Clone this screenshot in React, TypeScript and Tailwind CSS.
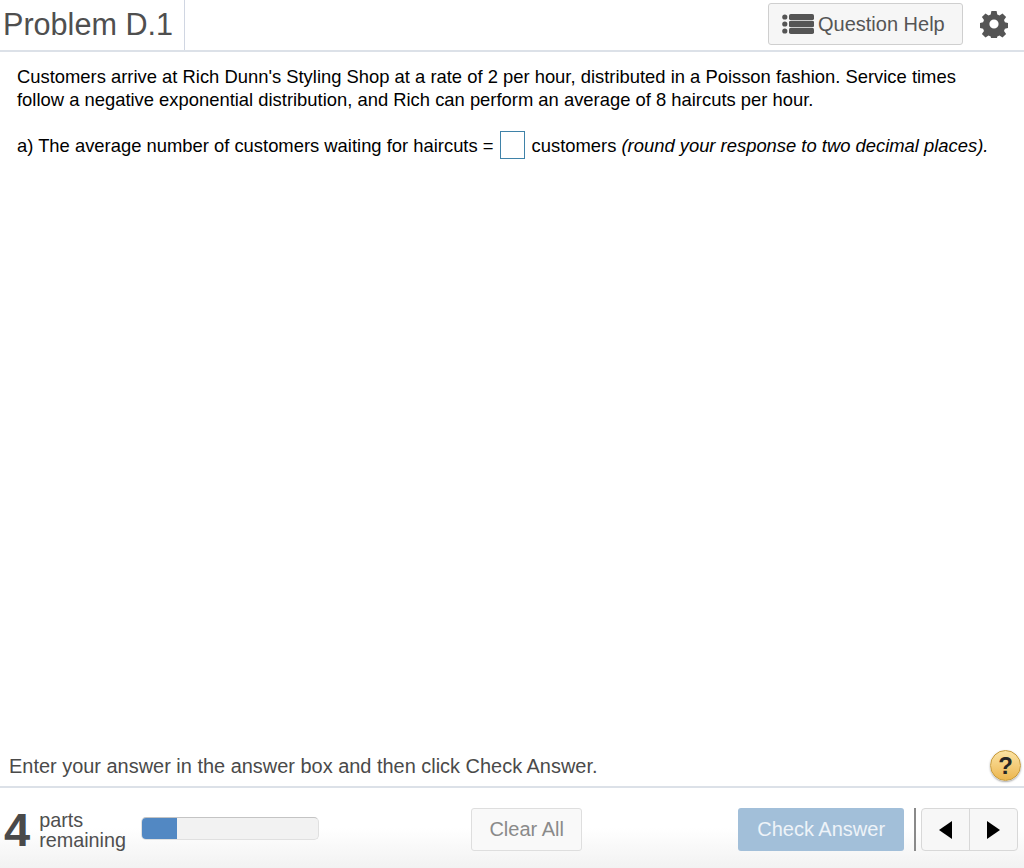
const font = "font-['Liberation_Sans',Arial,sans-serif]";

function ListIcon() {
  return (
    <svg width="32" height="22" viewBox="0 0 32 22" className="shrink-0" fill="#555">
      <circle cx="2.8" cy="4" r="2.6" />
      <circle cx="2.8" cy="11" r="2.6" />
      <circle cx="2.8" cy="18" r="2.6" />
      <rect x="7" y="1" width="25" height="6.2" rx="1.8" />
      <rect x="7" y="7.9" width="25" height="6.2" rx="1" />
      <rect x="7" y="14.8" width="25" height="6.2" rx="1.8" />
    </svg>
  );
}

function GearIcon() {
  return (
    <svg width="28" height="28" viewBox="0 0 28 28" fill="#555">
      <path
        fillRule="evenodd"
        d="M11.4 1h5.2l.7 3.6 2.2.9 3-2.1 3.6 3.6-2.1 3 .9 2.2 3.1.7v5.2l-3.1.7-.9 2.2 2.1 3-3.6 3.6-3-2.1-2.2.9-.7 3.6h-5.2l-.7-3.6-2.2-.9-3 2.1-3.6-3.6 2.1-3-.9-2.2-3.1-.7v-5.2l3.1-.7.9-2.2-2.1-3 3.6-3.6 3 2.1 2.2-.9zM14 9.4a4.6 4.6 0 1 0 0 9.2 4.6 4.6 0 0 0 0-9.2z"
      />
    </svg>
  );
}

export default function App() {
  return (
    <div className={`${font} flex h-[868px] w-[1024px] flex-col overflow-hidden bg-white text-black`}>
      <header className="flex h-[52px] shrink-0 items-start border-b-2 border-[#dce1e8]">
        <h1 className="m-0 h-[50px] w-[185px] border-r border-[#d0d6e2] pl-[3px] pt-[5px] text-[30.6px] leading-[38px] font-normal text-[#4f4f4f]">
          Problem D.1
        </h1>
        <div className="ml-auto flex items-center pt-[3px] pr-[16px]">
          <button className="flex h-[42px] w-[195px] items-center gap-[4px] rounded-[3px] border border-[#cfcfcf] bg-[#f6f6f6] pl-[13px] text-[20px] text-[#555]">
            <ListIcon />
            Question Help
          </button>
          <div className="ml-[17px] flex h-[42px] items-center">
            <GearIcon />
          </div>
        </div>
      </header>

      <main className="flex-1 pl-[17px] pr-[16px] pt-[13px] text-[18.4px] leading-[23px]">
        <p className="m-0">
          Customers arrive at Rich Dunn's Styling Shop at a rate of 2 per hour, distributed in a Poisson fashion. Service times
          <br />
          follow a negative exponential distribution, and Rich can perform an average of 8 haircuts per hour.
        </p>
        <p className="m-0 mt-[20px] flex items-center">
          a) The average number of customers waiting for haircuts =
          <span className="ml-[6px] mr-[7px] h-[28px] w-[25px] border border-[#3f82a8] bg-white" />
          customers&nbsp;<i>(round your response to two decimal places).</i>
        </p>
      </main>

      <div className="flex h-[41px] shrink-0 items-center justify-between pl-[9px] pr-[3px] text-[19.95px] text-[#4a4a4a]">
        <span className="pt-[2px]">Enter your answer in the answer box and then click Check Answer.</span>
        <div className="flex h-[31px] w-[31px] items-center justify-center rounded-full border border-[#c69a3c] bg-gradient-to-b from-[#fbe3a3] to-[#ecb64c] text-[24px] leading-none font-bold text-[#262626] shadow-[0_1px_2px_rgba(0,0,0,0.35)]">
          ?
        </div>
      </div>

      <footer className="flex h-[82px] shrink-0 items-start border-t-2 border-[#dce1e8] bg-gradient-to-b from-white via-white to-[#f2f2f2] pt-[20px]">
        <span className="ml-[4px] text-[47px] leading-[44px] font-bold text-[#4a4a4a]">4</span>
        <div className="ml-[9px] w-[100px] pt-[2px] text-[19.8px] leading-[20px] text-[#4f4f4f]">
          parts
          <br />
          remaining
        </div>
        <div className="ml-[2px] mt-[9px] h-[23px] w-[178px] overflow-hidden rounded-[5px] border border-[#e0e0e0] border-t-[#c4c4c4] bg-[#f2f2f2]">
          <div className="-mt-px -ml-px h-[23px] w-[36px] bg-[#5288c3]" />
        </div>
        <button className="ml-[152px] h-[43px] w-[111px] rounded-[3px] border border-[#dedede] bg-[#f9f9f9] pb-[2px] text-[20px] text-[#8a8a8a]">
          Clear All
        </button>
        <button className="ml-[156px] h-[43px] w-[166px] rounded-[3px] bg-[#a2bfd9] pb-[2px] text-[20px] text-[#eef3f8]">
          Check Answer
        </button>
        <div className="ml-[10px] h-[43px] w-[2px] bg-[#8a8a8a]" />
        <div className="ml-[5px] flex h-[43px] w-[97px] rounded-[4px] border border-[#d8d8d8] bg-[#f7f7f7]">
          <div className="flex w-[48px] items-center justify-center border-r border-[#d8d8d8]">
            <svg width="13" height="18" viewBox="0 0 13 18"><path d="M13 0v18L0 9z" fill="#000" /></svg>
          </div>
          <div className="flex flex-1 items-center justify-center">
            <svg width="13" height="18" viewBox="0 0 13 18"><path d="M0 0v18l13-9z" fill="#000" /></svg>
          </div>
        </div>
      </footer>
    </div>
  );
}
